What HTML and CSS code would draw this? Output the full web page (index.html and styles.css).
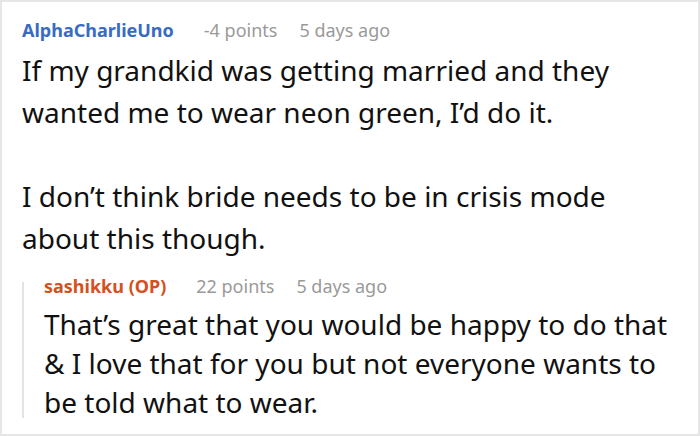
FILE: index.html
```html
<!DOCTYPE html>
<html>
<head>
<meta charset="utf-8">
<link rel="stylesheet" href="styles.css">
</head>
<body>
<div class="card">
  <div class="comment">
    <div class="meta">
      <span class="author">AlphaCharlieUno</span>
      <span class="info">-4 points</span>
      <span class="info">5 days ago</span>
    </div>
    <div class="text">
      <p>If my grandkid was getting married and they wanted me to wear neon green, I’d do it.</p>
      <p>I don’t think bride needs to be in crisis mode about this though.</p>
    </div>
  </div>
  <div class="reply">
    <div class="rail"></div>
    <div class="reply-body">
      <div class="meta">
        <span class="author op">sashikku (OP)</span>
        <span class="info">22 points</span>
        <span class="info">5 days ago</span>
      </div>
      <div class="text reply-text">
        <p>That’s great that you would be happy to do that &amp; I love that for you but not everyone wants to be told what to wear.</p>
      </div>
    </div>
  </div>
</div>
</body>
</html>
```
FILE: styles.css
```css
html, body {
  margin: 0;
  padding: 0;
  background: #ffffff;
}
.card {
  width: 700px;
  height: 436px;
  box-sizing: border-box;
  border: 2px solid #e6e6e6;
  padding: 16px 20px 0 20px;
  font-family: "Noto Sans", "Open Sans", sans-serif;
  color: #111111;
  overflow: hidden;
}
.meta {
  display: flex;
  align-items: center;
  height: 24px;
  font-size: 18px;
  line-height: 24px;
}
.author {
  font-weight: 700;
  color: #3a6bc2;
  margin-right: 8px;
}
.author.op {
  color: #d4501e;
}
.info {
  color: #9a9a9a;
  margin-left: 22px;
}
.comment .meta {
  margin-bottom: 7px;
}
.text {
  font-size: 28px;
  line-height: 42px;
}
.text p {
  margin: 0;
}
.text p + p {
  margin-top: 42px;
}
.reply {
  display: flex;
  margin-top: 15px;
}
.rail {
  width: 2px;
  background: #e4e4e4;
  margin-top: 8px;
  margin-bottom: 4px;
  flex: none;
}
.reply-body {
  padding-left: 20px;
}
.reply-text {
  margin-top: 7px;
  line-height: 39px;
}
```
